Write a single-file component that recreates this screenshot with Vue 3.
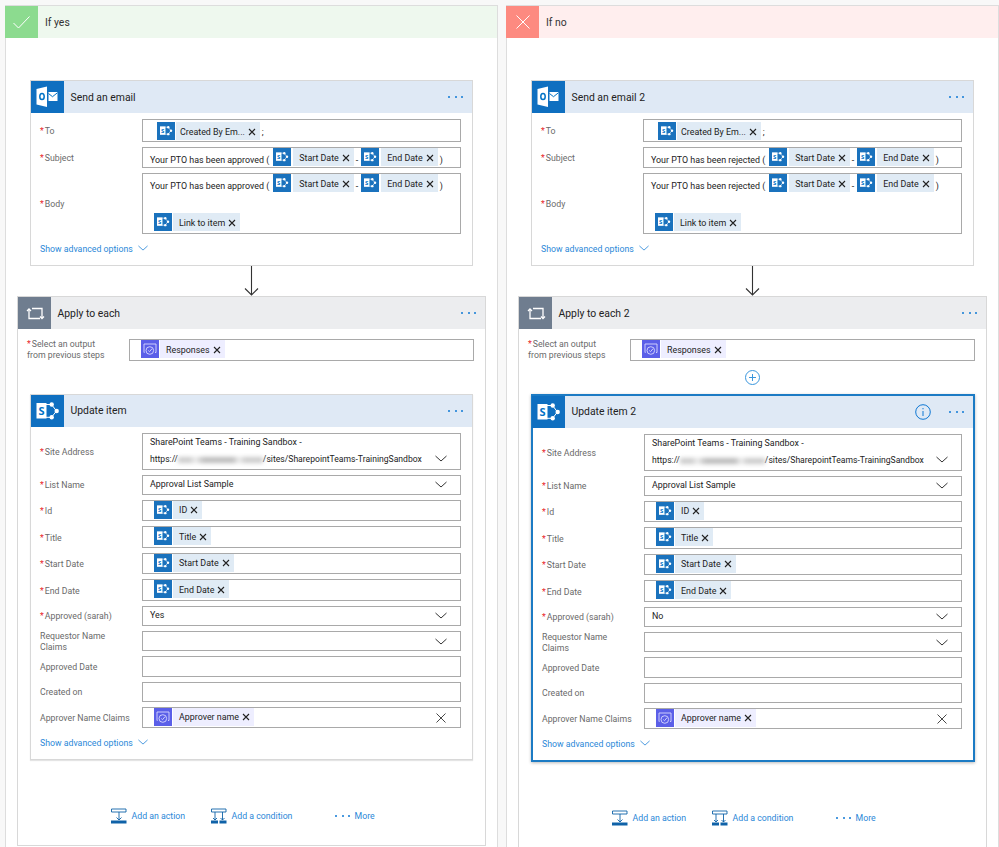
<script setup>
const columns = [
  {
    key: 'yes', icon: 'check', title: 'If yes', email: 'Send an email', word: 'approved',
    apply: 'Apply to each', update: 'Update item', approved: 'Yes', selected: false,
  },
  {
    key: 'no', icon: 'cross', title: 'If no', email: 'Send an email 2', word: 'rejected',
    apply: 'Apply to each 2', update: 'Update item 2', approved: 'No', selected: true,
  },
]

const sp = (text) => ({ text, icon: 'sp' })
const forms = (text) => ({ text, icon: 'forms' })

const updateRows = (approved) => [
  { label: 'Id', req: true, chip: sp('ID') },
  { label: 'Title', req: true, chip: sp('Title') },
  { label: 'Start Date', req: true, chip: sp('Start Date') },
  { label: 'End Date', req: true, chip: sp('End Date') },
  { label: 'Approved (sarah)', req: true, value: approved, end: 'chevron' },
  { label: 'Requestor Name Claims', end: 'chevron' },
  { label: 'Approved Date' },
  { label: 'Created on' },
  { label: 'Approver Name Claims', chip: forms('Approver name'), end: 'clear' },
]
</script>

<template>
  <div class="page">
    <svg class="defs" aria-hidden="true">
      <symbol id="i-outlook" viewBox="0 0 33 33">
        <path d="M5.500 8 16 5.500v20.500L5.500 23.500z" fill="#fff" />
        <ellipse cx="11" cy="15.500" rx="2.200" ry="3.100" fill="none" stroke="#0072c6" stroke-width="1.500" />
        <path d="M17.500 11h9v9h-9z" fill="#fff" />
        <path d="m17.500 12.500 4 3.200 5-4" fill="none" stroke="#0072c6" stroke-width="1" />
      </symbol>
      <symbol id="i-sp" viewBox="0 0 33 33">
        <path d="M15 9.500h5.500l5 6.500-5 6.300H15" fill="none" stroke="#fff" stroke-width="1" />
        <circle cx="20.700" cy="9.500" r="2.200" fill="#fff" />
        <circle cx="25.700" cy="16" r="2.200" fill="#fff" />
        <circle cx="20.700" cy="22.300" r="2.200" fill="#fff" />
        <rect x="5.500" y="8" width="10" height="15.500" fill="#fff" />
        <text x="10.500" y="20" text-anchor="middle" class="sp-letter">S</text>
      </symbol>
      <symbol id="i-forms" viewBox="0 0 18 18">
        <path d="M3.500 12.500h-.5v-8.500h12v8.500h-1" fill="none" stroke="#d9d9ff" stroke-width=".9" />
        <circle cx="8.800" cy="10.500" r="3.800" fill="none" stroke="#d9d9ff" stroke-width=".9" />
        <path d="m7.300 10.500 1.200 1.200 2.500-3" fill="none" stroke="#d9d9ff" stroke-width=".9" />
      </symbol>
      <symbol id="i-loop" viewBox="0 0 33 33">
        <path d="M11 12.500V21.500H22M14 11.500H24V21" fill="none" stroke="#fff" stroke-width="1.300" />
        <path d="m9 14 2-2 2 2M22 19.500l2 2 2-2" fill="none" stroke="#fff" stroke-width="1.300" />
      </symbol>
      <symbol id="i-x" viewBox="0 0 8 8">
        <path d="m1 1 6 6M7 1 1 7" fill="none" stroke="#222" stroke-width="1.100" />
      </symbol>
      <symbol id="i-down" viewBox="0 0 12 7">
        <path d="m.5 1 5.500 5 5.500-5" fill="none" stroke="currentColor" stroke-width="1" />
      </symbol>
      <symbol id="i-action" viewBox="0 0 16 16">
        <path d="M.5 1h14.500v3H.5zM8 4v8M5.500 9.500 8 12l2.500-2.500" fill="none" stroke="#0f62a8" stroke-width=".9" />
        <rect y="12.500" width="15.500" height="3" fill="#0f62a8" />
      </symbol>
      <symbol id="i-condition" viewBox="0 0 16 16">
        <path d="M.5 1h14.500v3H.5zM4 4v8M11.500 4v8M2 10l2 2 2-2M9.500 10l2 2 2-2" fill="none" stroke="#0f62a8" stroke-width=".9" />
        <rect y="12.500" width="7" height="3" fill="#0f62a8" />
        <rect x="8.500" y="12.500" width="7" height="3" fill="#0f62a8" />
      </symbol>
    </svg>

    <section v-for="col in columns" :key="col.key" class="branch">
      <header class="branch-head" :class="col.key">
        <span class="branch-icon">
          <svg v-if="col.icon === 'check'" width="17" height="13" viewBox="0 0 17 13">
            <path d="m.5 7 5 5 11-11.500" fill="none" stroke="#fff" stroke-width="1" />
          </svg>
          <svg v-else width="14" height="14" viewBox="0 0 14 14">
            <path d="m.5.500 13 13M13.500.500l-13 13" fill="none" stroke="#fff" stroke-width="1" />
          </svg>
        </span>
        <span class="branch-title">{{ col.title }}</span>
      </header>

      <div class="branch-body">
        <!-- Send an email -->
        <article class="card">
          <div class="card-head">
            <span class="card-icon"><svg width="33" height="33"><use href="#i-outlook" /></svg></span>
            <span class="card-title">{{ col.email }}</span>
            <span class="dots"><i></i><i></i><i></i></span>
          </div>
          <div class="fields">
            <div class="row">
              <label class="lbl"><b>*</b>To</label>
              <div class="input to">
                <span class="chip">
                  <svg class="chip-icon" width="18" height="18"><use href="#i-sp" /></svg>
                  <span class="chip-body">Created By Em... <svg width="8" height="8"><use href="#i-x" /></svg></span>
                </span>
                <span class="semi">;</span>
              </div>
            </div>
            <div class="row">
              <label class="lbl"><b>*</b>Subject</label>
              <div class="input mixed">
                <span class="plain">Your PTO has been {{ col.word }} (</span>
                <span class="chip">
                  <svg class="chip-icon" width="18" height="18"><use href="#i-sp" /></svg>
                  <span class="chip-body">Start Date <svg width="8" height="8"><use href="#i-x" /></svg></span>
                </span>
                <span class="plain dash">-</span>
                <span class="chip">
                  <svg class="chip-icon" width="18" height="18"><use href="#i-sp" /></svg>
                  <span class="chip-body">End Date <svg width="8" height="8"><use href="#i-x" /></svg></span>
                </span>
                <span class="plain">)</span>
              </div>
            </div>
            <div class="row">
              <label class="lbl"><b>*</b>Body</label>
              <div class="input body-input">
                <div class="mixed">
                  <span class="plain">Your PTO has been {{ col.word }} (</span>
                  <span class="chip">
                    <svg class="chip-icon" width="18" height="18"><use href="#i-sp" /></svg>
                    <span class="chip-body">Start Date <svg width="8" height="8"><use href="#i-x" /></svg></span>
                  </span>
                  <span class="plain dash">-</span>
                  <span class="chip">
                    <svg class="chip-icon" width="18" height="18"><use href="#i-sp" /></svg>
                    <span class="chip-body">End Date <svg width="8" height="8"><use href="#i-x" /></svg></span>
                  </span>
                  <span class="plain">)</span>
                </div>
                <span class="chip link-chip">
                  <svg class="chip-icon" width="18" height="18"><use href="#i-sp" /></svg>
                  <span class="chip-body">Link to item <svg width="8" height="8"><use href="#i-x" /></svg></span>
                </span>
              </div>
            </div>
            <a class="advanced">Show advanced options <svg width="10" height="6"><use href="#i-down" /></svg></a>
          </div>
        </article>

        <div class="connector"><svg width="15" height="30" viewBox="0 0 15 30">
          <path d="M7.500 0v29M1 22.500l6.500 6.500 6.500-6.500" fill="none" stroke="#333" stroke-width="1.100" />
        </svg></div>

        <!-- Apply to each -->
        <article class="apply">
          <div class="card-head grey">
            <span class="card-icon"><svg width="33" height="33"><use href="#i-loop" /></svg></span>
            <span class="card-title">{{ col.apply }}</span>
            <span class="dots"><i></i><i></i><i></i></span>
          </div>
          <div class="row select-row">
            <label class="lbl"><b>*</b>Select an output<br />from previous steps</label>
            <div class="input chipped">
              <span class="chip violet">
                <svg class="chip-icon" width="18" height="18"><use href="#i-forms" /></svg>
                <span class="chip-body">Responses <svg width="8" height="8"><use href="#i-x" /></svg></span>
              </span>
            </div>
          </div>

          <div class="insert">
            <svg v-if="col.selected" width="15" height="15" viewBox="0 0 15 15">
              <circle cx="7.500" cy="7.500" r="7" fill="none" stroke="#3a96dd" />
              <path d="M7.500 4v7M4 7.500h7" fill="none" stroke="#3a96dd" />
            </svg>
          </div>

          <article class="card inner" :class="{ selected: col.selected }">
            <div class="card-head">
              <span class="card-icon"><svg width="33" height="33"><use href="#i-sp" /></svg></span>
              <span class="card-title">{{ col.update }}</span>
              <svg v-if="col.selected" class="info" width="16" height="16" viewBox="0 0 16 16">
                <circle cx="8" cy="8" r="7.300" fill="none" stroke="#0f78d4" />
                <path d="M8 7v5M8 4v1.300" fill="none" stroke="#0f78d4" />
              </svg>
              <span class="dots"><i></i><i></i><i></i></span>
            </div>
            <div class="fields">
              <div class="row">
                <label class="lbl"><b>*</b>Site Address</label>
                <div class="input site">
                  <div class="site-text">
                    <div>SharePoint Teams - Training Sandbox -</div>
                    <div class="url">https://<span class="smudge"></span>/sites/SharepointTeams-TrainingSandbox</div>
                  </div>
                  <svg class="end-down" width="12" height="7"><use href="#i-down" /></svg>
                </div>
              </div>
              <div class="row">
                <label class="lbl"><b>*</b>List Name</label>
                <div class="input single">
                  <span class="plain grow">Approval List Sample</span>
                  <svg class="end-down" width="12" height="7"><use href="#i-down" /></svg>
                </div>
              </div>
              <div v-for="row in updateRows(col.approved)" :key="row.label" class="row">
                <label class="lbl"><b v-if="row.req">*</b>{{ row.label }}</label>
                <div v-if="row.chip" class="input chipped">
                  <span class="chip" :class="{ violet: row.chip.icon === 'forms' }">
                    <svg class="chip-icon" width="18" height="18"><use :href="'#i-' + row.chip.icon" /></svg>
                    <span class="chip-body">{{ row.chip.text }} <svg width="8" height="8"><use href="#i-x" /></svg></span>
                  </span>
                  <svg v-if="row.end === 'clear'" class="clear" width="10" height="10" viewBox="0 0 10 10">
                    <path d="m.5.500 9 9M9.500.500l-9 9" fill="none" stroke="#333" stroke-width=".9" />
                  </svg>
                </div>
                <div v-else class="input single">
                  <span class="plain grow">{{ row.value }}</span>
                  <svg v-if="row.end === 'chevron'" class="end-down" width="12" height="7"><use href="#i-down" /></svg>
                </div>
              </div>
              <a class="advanced">Show advanced options <svg width="10" height="6"><use href="#i-down" /></svg></a>
            </div>
          </article>

          <div class="actions">
            <a class="act first"><svg width="16" height="16"><use href="#i-action" /></svg>Add an action</a>
            <a class="act second"><svg width="16" height="16"><use href="#i-condition" /></svg>Add a condition</a>
            <a class="act"><span class="dots small"><i></i><i></i><i></i></span>More</a>
          </div>
        </article>
      </div>
    </section>
  </div>
</template>

<style>
html,
body {
  margin: 0;
  background: #f8f8f8;
  overflow: hidden;
}
</style>

<style scoped>
.page {
  display: grid;
  grid-template-columns: 493px 493px;
  gap: 8px;
  padding: 5px 0 0 5px;
  height: 842px;
  overflow: hidden;
  font-family: Roboto, 'Noto Sans', sans-serif;
  font-size: 8.900px;
  color: #333;
}

.defs {
  display: none;
}

.sp-letter {
  font-family: 'Open Sans', sans-serif;
  font-size: 11px;
  font-weight: 700;
  fill: #0072c6;
}

/* --- condition branch --- */
.branch {
  background: #fff;
  border: 1px solid #ddd;
  border-bottom: 0;
  box-sizing: border-box;
  height: 900px;
}

.branch-head {
  display: flex;
  align-items: center;
  height: 32px;
  margin-left: -1px;
}

.branch-head.yes {
  background: #eef8ee;
}

.branch-head.no {
  background: #ffeeee;
}

.branch-icon {
  width: 33px;
  height: 32px;
  display: flex;
  align-items: center;
  justify-content: center;
}

.yes .branch-icon {
  background: #8cdb8f;
}

.no .branch-icon {
  background: #fd8a80;
}

.branch-title {
  margin-left: 7px;
  font-size: 10.400px;
}

.branch-body {
  padding: 42px 11px 0;
  display: flex;
  flex-direction: column;
}

/* --- cards --- */
.card {
  margin: 0 13px;
  background: #fff;
  border: 1px solid #d8d8d8;
}

.card.inner {
  margin: 0 12px;
  box-shadow: 0 1px 1px #e4e4e4;
}

.card.selected {
  border: 2px solid #1c7bc4;
  margin-right: 11px;
  box-shadow: 0 1px 3px #bbb;
}

.card.selected .card-icon {
  margin-left: -1px;
}

.card-head {
  display: flex;
  align-items: center;
  height: 32px;
  background: #dfe9f5;
}

.card-head.grey {
  background: #ecedef;
}

.card-icon {
  width: 33px;
  height: 32px;
  overflow: hidden;
  background: #0f6fc0;
  flex: none;
}

.grey .card-icon {
  background: #6f7d8f;
}

.card-title {
  margin-left: 6.500px;
  flex: 1;
  font-size: 10.400px;
  color: #222;
}

.info {
  margin-right: 18px;
}

.dots {
  display: flex;
  gap: 4.500px;
  margin-right: 9px;
}

.dots i {
  width: 2px;
  height: 2px;
  border-radius: 50%;
  background: #0f78d4;
}

.fields {
  padding: 6px 11px 5px 9px;
  display: flex;
  flex-direction: column;
  gap: 5px;
}

.row {
  display: flex;
  align-items: center;
}

.lbl {
  width: 102px;
  flex: none;
  box-sizing: border-box;
  margin-bottom: -2px;
  padding-right: 11px;
  color: #6a6a6a;
  font-size: 8.750px;
  line-height: 11px;
}

.select-row .lbl {
  margin: -1px 0;
  padding-right: 0;
}

.lbl b {
  color: #e8232a;
  font-weight: 400;
  margin-right: 1px;
}

.input {
  flex: 1;
  box-sizing: border-box;
  border: 1px solid #a9a9a9;
  background: #fff;
  display: flex;
  align-items: flex-start;
  color: #222;
}

.input.to {
  height: 23px;
  padding: 2px 0 0 14px;
}

.to .chip-body {
  padding-left: 4px;
}

.semi {
  margin: 5px 0 0 2px;
}

.mixed {
  display: flex;
  align-items: flex-start;
  height: 21px;
  padding-left: 7px;
}

.mixed .chip-body {
  margin-left: 2px;
}

.plain {
  line-height: 21px;
  margin-top: 2px;
  white-space: nowrap;
}

.mixed .plain:first-child {
  margin-right: 4px;
}

.dash {
  margin: 2px 3px 0 2px;
}

.mixed > .plain:last-child {
  margin-left: 2px;
}

.body-input {
  height: 61px;
  flex-direction: column;
}

.link-chip {
  margin: 18px 0 0 11px;
}

.single {
  align-items: center;
  height: 20.300px;
  padding: 0 13px 0 7px;
}

.single .plain {
  margin-top: 0;
}

.grow {
  flex: 1;
}

.chipped {
  height: 21.500px;
  padding: 0 0 0 11px;
  justify-content: space-between;
}

.clear {
  margin: 5px 14px 0 0;
}

.site {
  height: 37px;
  padding: 0 13px 0 7px;
  align-items: flex-end;
}

.site-text {
  flex: 1;
  line-height: 17.500px;
  white-space: nowrap;
}

.url {
  display: flex;
  font-size: 8.600px;
}

.smudge {
  width: 85px;
  height: 6px;
  margin-top: 6px;
  background: linear-gradient(90deg, #ccc 0 15%, #eee 20%, #bbb 30% 65%, #eee 72%, #ccc 78% 100%);
  filter: blur(2px);
}

.end-down {
  color: #333;
  margin-bottom: 7px;
}

.single .end-down {
  margin-bottom: 0;
}

/* --- token chips --- */
.chip {
  display: inline-flex;
  height: 18px;
  align-items: stretch;
  flex: none;
  white-space: nowrap;
}

.chip-icon {
  background: #1a72bd;
  flex: none;
}

.chip.violet .chip-icon {
  background: #5b5fe8;
}

.chip-body {
  display: flex;
  align-items: center;
  gap: 3px;
  margin-left: 1px;
  padding: 1px 4px 0 6px;
  background: #e0ebf5;
  color: #222;
}

.chip.violet .chip-body {
  background: #eeeeff;
}

.advanced {
  display: flex;
  align-items: center;
  gap: 5px;
  margin-top: -1px;
  color: #2b88d8;
  font-size: 8.750px;
  line-height: 22px;
}

.advanced svg {
  margin-top: -3px;
  color: #2b88d8;
}

/* --- connector and apply to each --- */
.connector {
  height: 30px;
  display: flex;
  justify-content: center;
}

.apply {
  background: #fff;
  border: 1px solid #d8d8d8;
}

.select-row {
  margin: 10px 11px 0 9px;
}

.insert {
  height: 33px;
  display: flex;
  align-items: center;
  justify-content: center;
}

.actions {
  display: flex;
  padding: 48px 0 21px 93px;
  font-size: 8.750px;
}

.act {
  display: flex;
  align-items: center;
  gap: 4.500px;
  color: #2b88d8;
}

.act.first {
  width: 100px;
}

.act.second {
  width: 124px;
}

.dots.small {
  margin-right: 0;
  width: 15px;
}
</style>
